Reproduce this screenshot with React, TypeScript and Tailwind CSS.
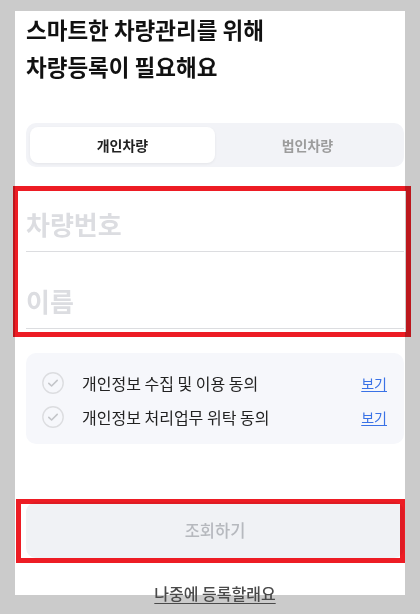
import React from "react";

const font = { fontFamily: '"Noto Sans CJK KR", "Noto Sans", sans-serif' };

function CheckCircle() {
  return (
    <svg width="22" height="22" viewBox="0 0 22 22" className="shrink-0">
      <circle cx="11" cy="11" r="10.2" fill="none" stroke="#dcdde0" strokeWidth="1.4" />
      <path d="M6.8 11.3 L9.6 14 L15.2 8.4" fill="none" stroke="#c3c5c9" strokeWidth="1.6" strokeLinecap="round" strokeLinejoin="round" />
    </svg>
  );
}

function AgreeRow({ label }: { label: string }) {
  return (
    <div className="flex h-[34px] items-center pl-4 pr-[17px]">
      <CheckCircle />
      <span className="ml-[18px] flex-1 text-[16px] leading-5 text-[#222]">{label}</span>
      <a href="#" className="text-[14px] leading-5 text-[#3a72e6] underline underline-offset-2">
        보기
      </a>
    </div>
  );
}

export default function App() {
  return (
    <div className="relative h-[614px] w-[420px] bg-[#cbcbcb] pt-[15px]" style={font}>
      <div className="ml-[15px] h-[584px] w-[390px] bg-white pl-[11px] pr-[1px]">
        <h1 className="-mt-[4px] text-[22.5px] font-bold leading-[37px] text-[#111]">
          <span className="block">스마트한 차량관리를 위해</span>
          <span className="block">차량등록이 필요해요</span>
        </h1>

        <div className="mt-[38px] flex h-[44px] rounded-[10px] bg-[#f2f3f7] p-1">
          <button className="flex flex-1 items-center justify-center rounded-[8px] bg-white text-[14px] font-bold text-[#222] shadow-[0_1px_3px_rgba(0,0,0,0.06)]">
            개인차량
          </button>
          <button className="flex flex-1 items-center justify-center text-[14px] font-bold text-[#9c9c9c]">
            법인차량
          </button>
        </div>

        <div className="mt-2">
          <div className="h-[77px] border-b border-[#dcdde0] pt-[33px]">
            <input
              type="text"
              placeholder="차량번호"
              className="block h-8 w-full bg-transparent text-[26px] font-bold leading-8 outline-none placeholder:text-[#dcdde1]"
            />
          </div>
          <div className="h-[77px] border-b border-[#dcdde0] pt-[33px]">
            <input
              type="text"
              placeholder="이름"
              className="block h-8 w-full bg-transparent text-[26px] font-bold leading-8 outline-none placeholder:text-[#dcdde1]"
            />
          </div>
        </div>

        <div className="mt-6 rounded-[10px] bg-[#f6f7fb] pt-[13px] pb-[10px]">
          <AgreeRow label="개인정보 수집 및 이용 동의" />
          <AgreeRow label="개인정보 처리업무 위탁 동의" />
        </div>

        <button className="mt-[58px] flex h-[56px] w-full items-center justify-center rounded-[10px] bg-[#f0f2f5] text-[16.5px] font-medium text-[#b6b9be]">
          조회하기
        </button>

        <div className="mt-[25px] flex justify-center">
          <a href="#" className="text-[16px] font-medium leading-5 text-[#4a4a4a] underline underline-offset-[3px]">
            나중에 등록할래요
          </a>
        </div>
      </div>

      <div className="pointer-events-none absolute left-[13px] top-[186px] h-[151px] w-[398px] border-[5px] border-[#ed1c24] mix-blend-multiply" />
      <div className="pointer-events-none absolute left-[16px] top-[499px] h-[64px] w-[389px] border-[5px] border-[#ed1c24] mix-blend-multiply" />
    </div>
  );
}
